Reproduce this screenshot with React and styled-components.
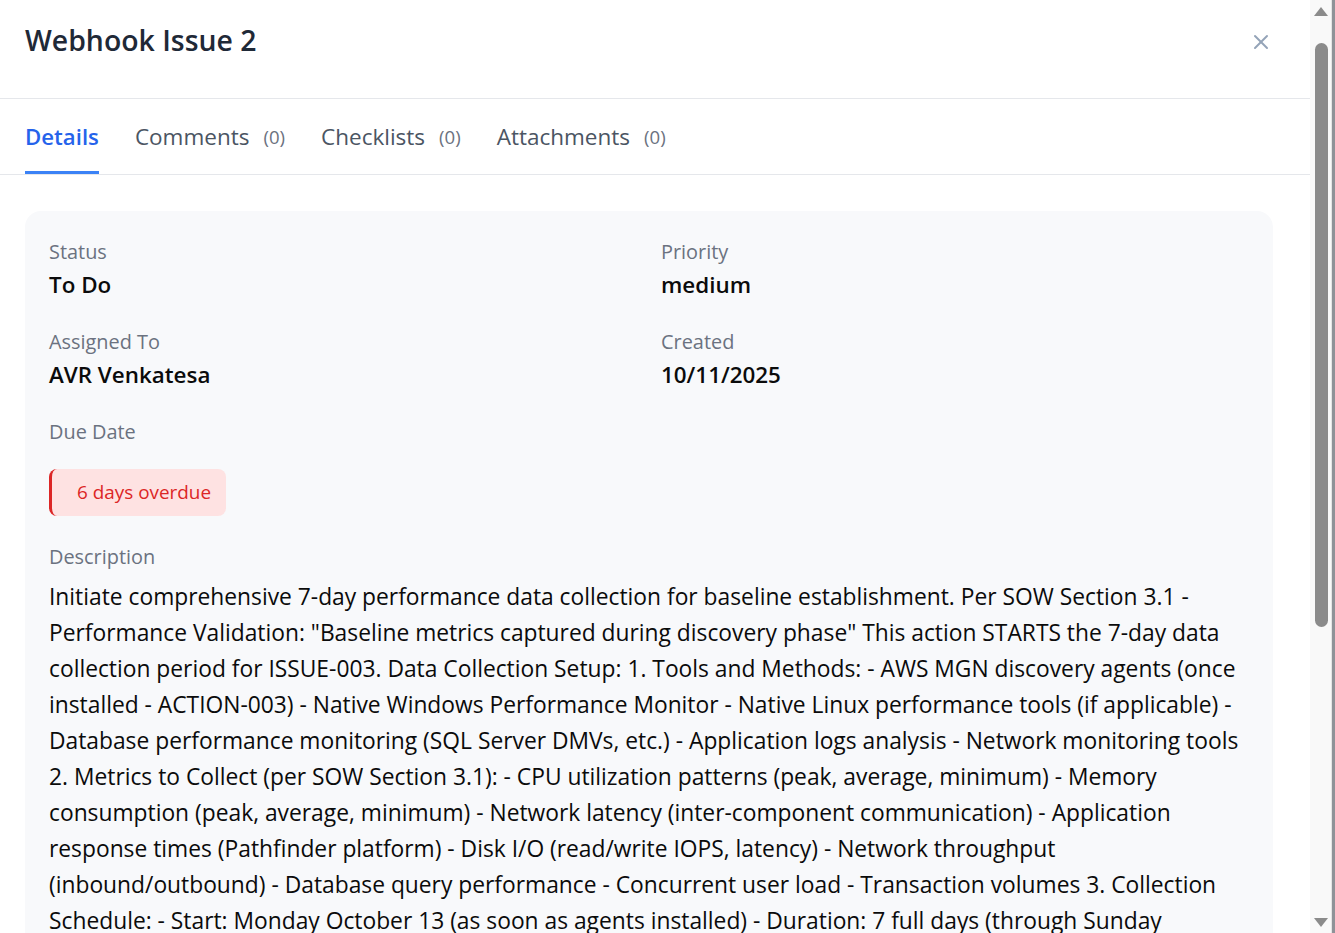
import React from "react";
import styled, { createGlobalStyle } from "styled-components";

const GlobalStyle = createGlobalStyle`
  html, body {
    margin: 0;
    padding: 0;
    height: 100%;
    overflow: hidden;
  }
  body {
    background: #8f9298;
    font-family: "Open Sans", "Noto Sans", sans-serif;
    -webkit-font-smoothing: antialiased;
  }
  * { box-sizing: border-box; }
`;

const Window = styled.div`
  display: flex;
  width: calc(100% - 3px);
  height: 100vh;
  background: #ffffff;
`;

const Drawer = styled.div`
  flex: 1;
  min-width: 0;
  height: 100%;
  overflow-y: auto;
  scrollbar-width: none;
  &::-webkit-scrollbar { display: none; }
`;

const ScrollRail = styled.div`
  width: 22px;
  flex: none;
  display: flex;
  flex-direction: column;
  background: #f9f9f9;
  border-right: 1px solid #e4e4e4;
`;

const RailArrow = styled.div`
  height: 22px;
  display: flex;
  align-items: center;
  justify-content: center;
  color: #8b8b8b;
`;

const RailTrack = styled.div`
  flex: 1;
  padding: 21px 3px 0 5px;
`;

const RailThumb = styled.div`
  width: 13px;
  height: 584px;
  border-radius: 7px;
  background: #8b8b8b;
`;

const Header = styled.header`
  display: flex;
  justify-content: space-between;
  align-items: flex-start;
  height: 99px;
  padding: 20px 37px 0 25px;
  border-bottom: 1px solid #e5e7eb;
`;

const Title = styled.h2`
  margin: 0;
  font-size: 28.4px;
  line-height: 40px;
  font-weight: 600;
  color: #1f2937;
`;

const CloseButton = styled.button`
  width: 24px;
  height: 24px;
  margin-top: 10px;
  padding: 0;
  border: none;
  background: transparent;
  color: #94a3b8;
  display: flex;
  align-items: center;
  justify-content: center;
  cursor: pointer;
`;

const TabBar = styled.nav`
  display: flex;
  gap: 36px;
  padding: 0 25px;
  border-bottom: 1px solid #e5e7eb;
`;

const Tab = styled.button`
  display: flex;
  align-items: center;
  gap: 14px;
  height: 75px;
  padding: 3px 0 0;
  border: none;
  border-bottom: 3px solid ${(p) => (p.$active ? "#3b82f6" : "transparent")};
  background: transparent;
  font-family: inherit;
  font-size: ${(p) => (p.$active ? "22.2px" : "22.5px")};
  font-weight: ${(p) => (p.$active ? 600 : 400)};
  color: ${(p) => (p.$active ? "#2563eb" : "#4b5563")};
  cursor: pointer;
`;

const Count = styled.span`
  font-size: 18.6px;
  color: #6b7280;
`;

const Body = styled.div`
  padding: 36px 37px 24px 25px;
`;

const Card = styled.section`
  background: #f8f9fb;
  border-radius: 16px;
  padding: 26px 24px 26px;
  display: grid;
  grid-template-columns: 1fr 1fr;
  column-gap: 24px;
  row-gap: 25px;
`;

const Field = styled.div`
  grid-column: ${(p) => (p.$wide ? "1 / -1" : "auto")};
  display: flex;
  flex-direction: column;
  align-items: flex-start;
`;

const Label = styled.div`
  font-size: 19.9px;
  line-height: 30px;
  color: #6b7280;
`;

const Value = styled.div`
  font-size: 22.4px;
  line-height: 35px;
  font-weight: 600;
  color: #0b0b0b;
`;

const OverdueBadge = styled.div`
  margin: 22px 0 1px;
  padding: 10px 15px 10px 25px;
  border-left: 3px solid #dc2626;
  border-radius: 8px;
  background: #fee2e2;
  color: #dc2626;
  font-size: 18.9px;
  line-height: 27px;
`;

const Description = styled.p`
  margin: 7px 0 0;
  font-size: 22.8px;
  line-height: 36px;
  color: #0b0b0b;
`;

const descriptionText =
  'Initiate comprehensive 7-day performance data collection for baseline establishment. Per SOW Section 3.1 - Performance Validation: "Baseline metrics captured during discovery phase" This action STARTS the 7-day data collection period for ISSUE-003. Data Collection Setup: 1. Tools and Methods: - AWS MGN discovery agents (once installed - ACTION-003) - Native Windows Performance Monitor - Native Linux performance tools (if applicable) - Database performance monitoring (SQL Server DMVs, etc.) - Application logs analysis - Network monitoring tools 2. Metrics to Collect (per SOW Section 3.1): - CPU utilization patterns (peak, average, minimum) - Memory consumption (peak, average, minimum) - Network latency (inter-component communication) - Application response times (Pathfinder platform) - Disk I/O (read/write IOPS, latency) - Network throughput (inbound/outbound) - Database query performance - Concurrent user load - Transaction volumes 3. Collection Schedule: - Start: Monday October 13 (as soon as agents installed) - Duration: 7 full days (through Sunday October 19) - Sampling interval: 5 minutes for system metrics, 1 minute for application response times - Business hours and off-hours patterns captured separately 4. Deliverables: - Baseline performance report (peak, average, minimum per component) - Identification of bottlenecks and capacity constraints - Right-sizing recommendations for target AWS instance types - Documented thresholds for post-migration performance validation 5. Dependencies: - ACTION-003 (MGN discovery agent installation) must be completed first - Customer to provide read access to database monitoring views and application logs';

function CloseIcon() {
  return (
    <svg width="16" height="16" viewBox="0 0 16 16" fill="none" stroke="currentColor" strokeWidth="2" strokeLinecap="round">
      <line x1="2" y1="2" x2="14" y2="14" />
      <line x1="14" y1="2" x2="2" y2="14" />
    </svg>
  );
}

function ArrowIcon({ down }) {
  return (
    <svg width="14" height="9" viewBox="0 0 14 9" fill="currentColor">
      {down ? <polygon points="0,0 14,0 7,9" /> : <polygon points="7,0 14,9 0,9" />}
    </svg>
  );
}

const tabs = [
  { label: "Details", active: true },
  { label: "Comments", count: 0 },
  { label: "Checklists", count: 0 },
  { label: "Attachments", count: 0 },
];

export default function App() {
  return (
    <>
      <GlobalStyle />
      <Window>
        <Drawer>
          <Header>
            <Title>Webhook Issue 2</Title>
            <CloseButton aria-label="Close">
              <CloseIcon />
            </CloseButton>
          </Header>
          <TabBar>
            {tabs.map((t) => (
              <Tab key={t.label} $active={t.active}>
                {t.label}
                {t.count !== undefined && <Count>({t.count})</Count>}
              </Tab>
            ))}
          </TabBar>
          <Body>
            <Card>
              <Field>
                <Label>Status</Label>
                <Value>To Do</Value>
              </Field>
              <Field>
                <Label>Priority</Label>
                <Value>medium</Value>
              </Field>
              <Field>
                <Label>Assigned To</Label>
                <Value>AVR Venkatesa</Value>
              </Field>
              <Field>
                <Label>Created</Label>
                <Value>10/11/2025</Value>
              </Field>
              <Field $wide>
                <Label>Due Date</Label>
                <OverdueBadge>6 days overdue</OverdueBadge>
              </Field>
              <Field $wide>
                <Label>Description</Label>
                <Description>{descriptionText}</Description>
              </Field>
            </Card>
          </Body>
        </Drawer>
        <ScrollRail aria-hidden="true">
          <RailArrow>
            <ArrowIcon />
          </RailArrow>
          <RailTrack>
            <RailThumb />
          </RailTrack>
          <RailArrow>
            <ArrowIcon down />
          </RailArrow>
        </ScrollRail>
      </Window>
    </>
  );
}
